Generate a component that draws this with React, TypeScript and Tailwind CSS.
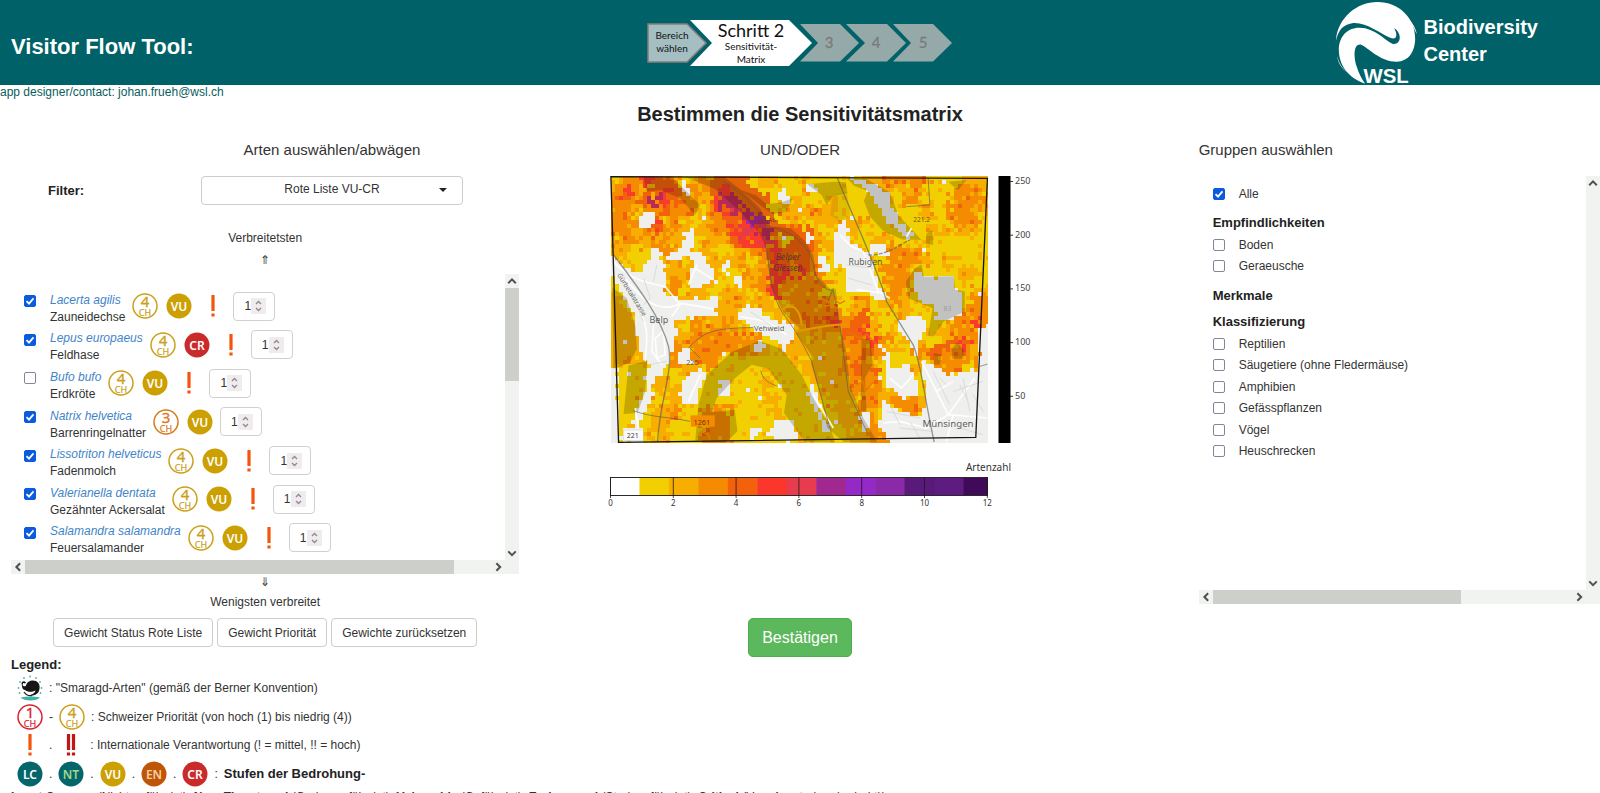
import { useState, type ReactNode } from "react";

/* ---------- header drawings ---------- */

function StepBar() {
  return (
    <svg viewBox="0 0 306 48" className="h-12 w-[306px]" role="img" aria-label="Schritt 2 von 5" fontFamily="Lato, 'Noto Sans', sans-serif">
      <path d="M1 5H40L59 24 40 43H1Z" fill="#a5bec2" stroke="#857e80" strokeWidth="1.500" />
      <path d="M43 1H142L165 24 142 47H43L65 24Z" fill="#fff" />
      <path d="M153 5H193L212 24 193 42.500H153L171 24Z" fill="#95aaa8" />
      <path d="M199 5H240L259 24 240 42.500H199L218 24Z" fill="#95aaa8" />
      <path d="M246 5H286L305 24 286 42.500H246L264 24Z" fill="#95aaa8" />
      <g textAnchor="middle">
        <g fill="#111" fontSize="10">
          <text x="25" y="20">Bereich</text>
          <text x="25" y="33">wählen</text>
          <text x="104" y="31">Sensitivität-</text>
          <text x="104" y="44">Matrix</text>
        </g>
        <text x="104" y="18" fontSize="18" fill="#111">Schritt 2</text>
        <g fill="#7b7b7b" fontSize="15" stroke="#7b7b7b" strokeWidth="0.300">
          <text x="182" y="29">3</text>
          <text x="229" y="29">4</text>
          <text x="276" y="29">5</text>
        </g>
      </g>
    </svg>
  );
}

function WslMark() {
  return (
    <svg viewBox="465 0 248 252" className="h-[84px] w-[83px]" role="img" aria-label="WSL" fill="#fff">
      <path d="M467 120C472 50 530 3 592 3 655 3 705 50 705 112 705 152 685 182 650 182 600 182 565 140 543 131 520 126 520 165 529 195 535 215 545 235 555 248 505 232 476 192 476 147 476 100 510 72 555 82 600 95 615 120 638 129 665 132 665 95 642 82 655 105 648 118 630 110 600 98 560 64 520 66 490 70 475 85 467 120Z" />
      <path d="M672 42C694 58 706 78 710 100 700 78 690 60 672 42Z" />
      <path d="M471 164C476 186 488 204 504 216 486 204 473 186 471 164Z" />
      <text x="550" y="247" fontFamily="'Liberation Sans', Arial, sans-serif" fontWeight="700" fontSize="61">WSL</text>
    </svg>
  );
}

/* ---------- badges ---------- */

function Priority({ level }: { level: number }) {
  const color = level === 1 ? "#d8232f" : level === 3 ? "#d97a1c" : "#cba01a";
  return (
    <svg viewBox="0 0 26 26" className="size-[26px] shrink-0" fill={color} textAnchor="middle" fontFamily="'Noto Sans', sans-serif">
      <circle cx="13" cy="13" r="12" fill="#fff" stroke={color} strokeWidth="1.500" />
      <text x="13" y="14" fontSize="15" stroke={color} strokeWidth="0.300">{level}</text>
      <text x="13" y="22.500" fontSize="9" stroke={color} strokeWidth="0.200">CH</text>
    </svg>
  );
}

const statusColors: Record<string, [string, string]> = {
  LC: ["#04666a", "#fff"],
  NT: ["#04666a", "#a6d68c"],
  VU: ["#cc9f02", "#fff"],
  EN: ["#bf5507", "#fbd0a0"],
  CR: ["#cb2a2a", "#fff"],
};

function Status({ code }: { code: string }) {
  const [bg, fg] = statusColors[code];
  return (
    <svg viewBox="0 0 26 26" className="size-[26px] shrink-0" textAnchor="middle" fontFamily="'Noto Sans', sans-serif">
      <circle cx="13" cy="13" r="12.500" fill={bg} />
      <text x="13" y="17.500" fontSize="12" fontWeight="600" fill={fg}>{code}</text>
    </svg>
  );
}

function Mark({ double = false }: { double?: boolean }) {
  const xs = double ? [10.5, 15.5] : [13];
  return (
    <svg viewBox="0 0 26 26" className="size-[26px] shrink-0" fill={double ? "#c21616" : "#f4550c"}>
      {xs.map((x) => (
        <g key={x}>
          <rect x={x - 1.6} y="2" width="3.200" height="16" />
          <rect x={x - 1.6} y="20.500" width="3.200" height="3" />
        </g>
      ))}
    </svg>
  );
}

function Emerald() {
  const dots = [[1.5, 13], [3, 7], [7, 3], [13, 1.5], [19, 3], [23, 7], [24.5, 13], [2.5, 18], [23.5, 18]];
  return (
    <svg viewBox="0 0 26 26" className="size-[26px] shrink-0">
      {dots.map(([x, y]) => <circle key={`${x}-${y}`} cx={x} cy={y} r="0.900" fill="#4fb3a6" />)}
      <path d="M3.500 22.500C10 21 17 21 23 22.500 20 26.500 7 26.500 3.500 22.500Z" fill="#3fb3a9" />
      <path d="M9 10.500C10 6 15 4.500 19 6 23 8 23.500 13 21.500 17 20 20 15 21.500 11 20.500 14 20 18 18.500 18.500 15.500 15 17.500 10 17 8 15 6 15 4.500 12 5 9 6 11.500 8 12 9 10.500Z" fill="#161616" />
      <path d="M5.500 9.500C4.500 7 7 6.500 8.500 8" stroke="#161616" strokeWidth="1.500" fill="none" />
      <path d="M7 17C9 20 12 21 15 20.500" stroke="#222" strokeWidth="1.300" fill="none" />
    </svg>
  );
}

/* ---------- controls ---------- */

function Tick({ id, initial = false }: { id: string; initial?: boolean }) {
  const [on, setOn] = useState(initial);
  return (
    <span className="relative grid size-3 shrink-0 place-items-center">
      <input
        id={id}
        type="checkbox"
        checked={on}
        onChange={() => setOn(!on)}
        className="size-3 appearance-none rounded-xs border border-[#85859a] bg-white checked:border-[#0a5be0] checked:bg-[#0a5be0]"
      />
      {on && (
        <svg viewBox="0 0 12 12" className="pointer-events-none absolute size-3" fill="none" stroke="#fff" strokeWidth="1.800">
          <path d="M2.500 6.200 5 8.700 9.500 3.300" />
        </svg>
      )}
    </span>
  );
}

function Chevron({ dir }: { dir: "up" | "down" | "left" | "right" }) {
  const paths = { up: "M3 8.500 6.500 5 10 8.500", down: "M3 5 6.500 8.500 10 5", left: "M8.500 3 5 6.500 8.500 10", right: "M5 3 8.500 6.500 5 10" };
  return (
    <svg viewBox="0 0 13 13" className="size-[14px] shrink-0" fill="none" stroke="#505050" strokeWidth="1.900">
      <path d={paths[dir]} />
    </svg>
  );
}

function VBar({ children }: { children?: ReactNode }) {
  return (
    <div aria-hidden="true" className="flex w-[14px] shrink-0 flex-col bg-[#f1f3f1]">
      <Chevron dir="up" />
      <div className="flex-1">{children}</div>
      <Chevron dir="down" />
    </div>
  );
}

function HBar({ children }: { children: ReactNode }) {
  return (
    <div aria-hidden="true" className="flex h-[14px] items-center bg-[#f1f3f1] pr-[14px]">
      <Chevron dir="left" />
      <div className="h-full flex-1">{children}</div>
      <Chevron dir="right" />
    </div>
  );
}

/* ---------- species list ---------- */

const species = [
  { latin: "Lacerta agilis", name: "Zauneidechse", prio: 4, status: "VU", mark: true, on: true },
  { latin: "Lepus europaeus", name: "Feldhase", prio: 4, status: "CR", mark: true, on: true },
  { latin: "Bufo bufo", name: "Erdkröte", prio: 4, status: "VU", mark: true, on: false },
  { latin: "Natrix helvetica", name: "Barrenringelnatter", prio: 3, status: "VU", mark: false, on: true },
  { latin: "Lissotriton helveticus", name: "Fadenmolch", prio: 4, status: "VU", mark: true, on: true },
  { latin: "Valerianella dentata", name: "Gezähnter Ackersalat", prio: 4, status: "VU", mark: true, on: true },
  { latin: "Salamandra salamandra", name: "Feuersalamander", prio: 4, status: "VU", mark: true, on: true },
];

function SpeciesRow({ item, index }: { item: (typeof species)[number]; index: number }) {
  const id = `species-${index}`;
  return (
    <li className="flex items-center">
      <div className="pb-[10px]">
        <Tick id={id} initial={item.on} />
      </div>
      <label htmlFor={id} className="ml-[14px] pt-[5px] leading-[17px]">
        <a href="#art" className="block text-[#4284c8] italic">{item.latin}</a>
        {item.name}
      </label>
      <div className="ml-[7px] flex gap-2">
        <Priority level={item.prio} />
        <Status code={item.status} />
        {item.mark && <Mark />}
      </div>
      <div className="ml-[7px] flex h-[29px] w-[42px] items-center rounded-sm border border-[#d0d0d0] pl-[10px]">
        <input
          type="number"
          defaultValue={1}
          aria-label={`Gewicht ${item.latin}`}
          className="w-[7px] appearance-none leading-4 [-moz-appearance:textfield] [&::-webkit-inner-spin-button]:appearance-none"
        />
        <svg viewBox="0 0 15 16" className="h-4 w-[15px] bg-[#f0ecee]" fill="none" stroke="#8c8894" strokeWidth="1.300">
          <path d="M5 6 7.500 3.500 10 6M5 10 7.500 12.500 10 10" />
        </svg>
      </div>
    </li>
  );
}

/* ---------- heat map ---------- */

type Pt = [number, number];

const heatRows = [
  "aoorddoyaonnnnyaayyayyyyyaaoooooyyyaaa",
  "oroadrdooonrnnnyyyyayyyyyyaayaoyyyoooa",
  "ooodmrdooarmmnnnyaayyaayyyyyyooyyyaooo",
  "ooaoodooayodmmnnyaaaoaayyyyyyyyaayoooa",
  "oooaraoayaordrpmnyayaaaayayyyyyyyyoooy",
  "ooaodoaaaaoorcrmddddayyyayyyyyyyaayaay",
  "aooaooaayoaadrrcoyddoayyayaayyyayyyyyy",
  "aayyooaayayyaaodrdddoyaaaayooooyyyyyyy",
  "ayyyaaayaaaaaoyordddoayyyayyoooayaayyy",
  "aayyyaaoaoayyoaorroroyyyyyyoooayyyyaay",
  "yyaaayoaaaayaaoorrooooyyayyoooyyyyyayy",
  "yyyayaoyaayaaayorooooyyyyyyaooyyyyyyaa",
  "yyayyyaaayaaoaaayaooooayaoyaoayyyyyyoo",
  "yyaayyaaaaaaaayaayoooooyadyyaayyyyyaoo",
  "ooaayyayoaaoayyyyaooddroddayyayyyyooro",
  "oaaayyayoooooaayaaaaoooddrayaayyyaaoao",
  "oaaayyaaoooooooyyaaaaaaodoroyaaayadroo",
  "ooaayyooooooooaayaaaaaaoodoaayooddooao",
  "ooaayyoaoooyyyyyyyaaaaaodoayyyyaoooooo",
  "yyyyyyyaayyyyyyyyyyaaaaododyyaaayooyyy",
  "yyyyaayyyyyyyyyayyyyaaaaoooyyayyayyyyy",
  "yyyyaaayyyyyyyyayyyyyaaaoooaaoyyayyyyy",
  "yyyayyayyyyyyyyaayyyyyaaaooaoooaayyyyy",
  "yyyyaaoyyoooyyyyayyyyyaaaoayyooaayyyyy",
  "yyyyaayyyyooyyyyyyyyyyyaaoayyyyaayyyyy",
  "yyaaaayyyoooyyyyyyyyyyyyaaoyyyyyyyyayy",
  "yyyyaayyyoooyyyyyyyayyayaaooyyyyyyooyy",
];

const heatColors: Record<string, string> = {
  y: "#f2cf00", a: "#f7ae00", o: "#f58b00", d: "#f0620c", r: "#fa3a2a",
  c: "#e33b4c", m: "#b92a56", p: "#a82a9c", n: "#e4640a", w: "#eff0ee",
};

const openAreas: Pt[][] = [
  [[31, 265], [70, 310], [110, 325], [150, 282], [192, 290], [196, 380], [240, 405], [350, 398], [352, 450], [230, 462], [228, 540], [205, 600], [165, 645], [150, 720], [105, 790], [95, 770], [130, 690], [142, 590], [118, 570], [100, 455], [31, 330]],
  [[262, 378], [278, 330], [275, 262], [312, 268], [330, 300], [352, 350]],
  [[255, 205], [282, 192], [282, 250], [245, 282], [208, 290], [205, 268], [250, 245]],
  [[152, 250], [178, 250], [182, 280], [155, 280]],
  [[402, 455], [435, 425], [470, 425], [500, 455], [585, 485], [585, 520], [555, 548], [500, 512], [440, 480]],
  [[704, 208], [730, 172], [745, 195], [752, 235], [810, 262], [832, 345], [860, 405], [835, 410], [810, 385], [740, 378], [735, 310], [704, 305]],
  [[810, 240], [865, 235], [862, 265], [815, 275]],
  [[960, 590], [1000, 600], [1060, 632], [1180, 600], [1180, 845], [885, 845], [840, 790], [850, 705], [910, 745], [965, 745], [985, 700], [975, 650]],
  [[883, 445], [900, 465], [950, 450], [985, 470], [965, 515], [950, 580], [930, 530], [900, 500]],
  [[870, 600], [935, 602], [960, 680], [905, 702], [848, 655]],
  [[755, 40], [800, 45], [865, 85], [885, 150], [942, 210], [925, 222], [890, 190], [860, 168], [840, 130], [808, 85]],
  [[945, 350], [935, 325], [965, 320], [985, 338], [1062, 335], [1068, 375], [1088, 380], [1085, 450], [1010, 470], [1000, 420], [950, 400]],
  [[255, 640], [300, 612], [322, 620], [292, 710], [250, 722], [240, 690]],
  [[110, 148], [156, 148], [162, 186], [112, 186]],
  [[530, 92], [555, 78], [575, 90], [570, 118], [540, 118]],
  [[615, 55], [648, 60], [648, 88], [618, 85]],
  [[365, 292], [395, 292], [395, 318], [370, 318]],
  [[402, 332], [430, 332], [432, 362], [405, 362]],
  [[245, 48], [268, 62], [270, 88], [250, 82]],
  [[615, 205], [640, 205], [638, 235], [618, 232]],
  [[535, 762], [580, 765], [605, 825], [560, 830], [500, 808]],
  [[450, 790], [480, 790], [480, 820], [452, 820]],
  [[355, 648], [392, 648], [388, 690], [360, 690]],
  [[465, 532], [495, 532], [490, 562], [465, 562]],
  [[232, 568], [258, 540], [265, 570], [285, 600], [235, 600]],
  [[780, 740], [810, 745], [810, 790], [790, 800]],
  [[850, 555], [875, 555], [870, 590], [850, 590]],
  [[660, 278], [680, 278], [685, 320], [662, 318]],
  [[620, 690], [640, 650], [660, 740], [700, 800], [680, 810], [650, 750]],
  [[31, 610], [50, 610], [55, 835], [31, 835]],
  [[72, 790], [130, 790], [130, 832], [60, 832]],
  [[1140, 500], [1180, 470], [1180, 620], [1140, 620]],
];

const extraCells: [string, Pt[]][] = [
  ["y", [[55, 620], [100, 600], [95, 730], [60, 780]]],
  ["a", [[31, 375], [110, 480], [110, 560], [31, 610]]],
  ["o", [[1055, 805], [1110, 805], [1110, 835], [1055, 835]]],
];

const shades = [
  "M255 36L372 36 430 80 480 130 512 185 572 190 615 228 640 270 648 330 690 372 708 372 715 460 740 570 750 660 790 760 832 832 732 832 682 790 664 700 634 600 634 570 588 505 598 490 548 440 512 365 500 255 478 205 420 140 345 72Z",
  "M130 36L215 36 260 80 300 120 285 150 240 100 180 75 140 80Z",
  "M425 76L470 92 500 118 545 112 578 100 560 140 520 148 490 128Z",
  "M622 58L700 50 738 52 742 85 700 92 680 120 665 90Z",
  "M740 38L800 42 870 82 895 150 965 225 908 224 850 198 810 155 792 108 804 78 762 62Z",
  "M918 350L945 310 965 298 972 336 1062 334 1066 375 1095 380 1095 440 1032 470 1000 515 985 512 998 430 925 400Z",
  "M36 368L80 400 106 485 110 552 88 595 40 612Z",
  "M85 602L142 588 135 680 112 745 70 748Z",
  "M285 832L295 720 320 630 395 562 478 528 545 552 605 630 640 700 692 790 705 832 615 832 552 745 560 690 505 612 455 600 405 640 350 700 335 742 404 735 412 800 380 832Z",
  "M1055 555L1070 532 1092 555 1090 582 1058 582Z",
  "M785 520L812 525 818 600 795 640 800 740 782 740Z",
  "M980 205L998 195 1000 240 978 235Z",
  "M1045 50L1100 45 1075 76Z",
  "M1002 565L1025 570 1020 600 1002 600Z",
];

const noise = (x: number, y: number, s: number) => {
  const v = Math.sin(x * 127.1 + y * 311.7 + s * 74.7) * 43758.5453;
  return v - Math.floor(v);
};

const inside = (x: number, y: number, poly: Pt[]) => {
  let hit = false;
  for (let i = 0, j = poly.length - 1; i < poly.length; j = i++) {
    const [xi, yi] = poly[i];
    const [xj, yj] = poly[j];
    if (yi > y !== yj > y && x < ((xj - xi) * (y - yi)) / (yj - yi) + xi) hit = !hit;
  }
  return hit;
};

const heatPaths = (() => {
  const size = 12;
  const out: Record<string, string> = {};
  const order = "yaodrcmp";
  for (let r = 0; r * size < 802; r++) {
    for (let c = 0; c * size < 1132; c++) {
      const x = 31 + c * size + 6;
      const y = 33 + r * size + 6;
      const jx = x + (noise(c, r, 1) - 0.5) * 26;
      const jy = y + (noise(c, r, 2) - 0.5) * 26;
      const row = heatRows[Math.max(0, Math.min(26, Math.floor((jy - 33) / 30)))];
      let key = row[Math.max(0, Math.min(37, Math.floor((jx - 31) / 30)))] ?? "y";
      const n = noise(c, r, 3);
      const at = order.indexOf(key);
      if (at >= 0 && n > 0.93 && at < 3) key = order[at + 1];
      else if (at > 0 && n < 0.09) key = order[at - 1];
      for (const [k, poly] of extraCells) if (inside(x, y, poly)) key = k;
      const wx = x + (noise(c, r, 4) - 0.5) * 10;
      const wy = y + (noise(c, r, 5) - 0.5) * 10;
      if (openAreas.some((p) => inside(wx, wy, p))) key = "w";
      else if (n > 0.493 && n < 0.5 && at < 2) key = "w";
      out[key] = (out[key] ?? "") + `M${x - 6} ${y - 6}h12v12h-12z`;
    }
  }
  return out;
})();

function HeatMap() {
  return (
    <svg viewBox="31 33 1132 802" className="h-[267px] w-[378px]" role="img" aria-label="Sensitivitätskarte" fontFamily="'Noto Sans', sans-serif">
      <g shapeRendering="crispEdges">
        {Object.entries(heatPaths).map(([k, d]) => <path key={k} d={d} fill={heatColors[k]} />)}
      </g>
      {shades.map((d) => <path key={d} d={d} fill="#000" fillOpacity="0.190" />)}
      <path d="M700 90L742 80 750 150 720 170 690 150Z" fill="#000" fillOpacity="0.080" />
      <g fill="none" stroke="#fff" strokeWidth="5" strokeOpacity="0.900">
        <path d="M38 290C90 340 120 350 195 365M75 340C120 400 180 450 240 415L340 432M195 365L240 420 215 455M110 430C150 480 140 530 135 590M160 480L155 560 185 600M165 520L190 500 195 570 170 580Z" />
        <path d="M265 360L290 300M285 310L340 345M420 455L500 470 560 510M720 210L755 245 790 260 835 380 870 400M770 375L850 385" />
        <path d="M965 590L1010 680 1045 750 1163 760M1045 750L980 790 900 770 850 775M1045 750L1125 640M1010 680L1060 650M1060 750L1040 830M870 640L905 670 940 630M920 215L935 190M300 630L265 710M105 730L115 790M640 690L700 790" />
      </g>
      <g fill="none" stroke="#cfcfcf" strokeWidth="2">
        <path d="M130 340L150 400 130 420M90 380L130 470M145 600L200 590M170 300L160 350M1000 620L1050 720M1060 680L1150 650M1090 640L1110 740M900 790L1000 800M870 720L900 780M1080 790L1150 810M740 300L820 310M745 340L815 360M450 440L540 500M1080 660L1100 700M1120 690L1150 740M1020 640L1040 660M860 740L960 760M930 770L960 820" />
      </g>
      <g fill="none" stroke="#555" strokeOpacity="0.600" strokeWidth="4">
        <path d="M40 270C100 350 180 450 205 545 220 620 180 700 172 832" />
        <path d="M712 38C760 160 830 300 860 410L940 540C965 600 970 680 1003 832" />
        <path d="M805 270C850 275 900 240 930 225" strokeDasharray="12 4" />
        <path d="M265 550C310 500 340 490 460 488M270 550L300 580" strokeWidth="3" />
        <path d="M100 738C160 760 200 755 270 770M482 618C490 650 510 655 530 664" strokeWidth="3" />
        <path d="M370 50C440 90 490 150 500 185 560 190 620 230 638 290 650 350 660 370 700 378 720 460 735 600 745 680L800 800" strokeWidth="3" />
        <path d="M500 255C510 340 520 400 545 440 580 490 590 500 635 590L670 720 690 790" strokeWidth="3" />
        <path d="M985 40L990 120 920 125M700 370L680 420M1140 605L1163 598" strokeWidth="3" />
      </g>
      <path d="M545 435C575 410 600 430 605 480M585 500C640 490 680 480 735 478" fill="none" stroke="#e39a00" strokeWidth="6" />
      <path d="M770 660l20-10 5 30 25-28M300 800l25 10 5 20M665 400l20 12 15-10 20 14 15-8M670 425l25-5 20 12M740 500l40 20 20-12 30 30" fill="none" stroke="#e37a00" strokeWidth="4" />
      <g fill="#333" fillOpacity="0.800" fontSize="26">
        <text x="148" y="476" fontSize="27">Belp</text>
        <text x="462" y="499" fontSize="23">Vehweid</text>
        <text x="746" y="299">Rubigen</text>
        <text x="968" y="786" fontSize="29">Münsingen</text>
        <text x="527" y="286" fontStyle="italic">Belper</text>
        <text x="520" y="318" fontStyle="italic">Giessen</text>
        <text x="940" y="172" fontSize="20">221.2</text>
        <text x="258" y="600" fontSize="22">225</text>
        <text x="505" y="170" fontSize="18">A6</text>
        <text x="1030" y="440" fontSize="22" fillOpacity="0.300">83</text>
      </g>
      <text transform="translate(50 330) rotate(58)" fontSize="20" fill="#666">Gürbetalstrasse</text>
      <rect x="272" y="752" width="72" height="34" fill="#f58b00" />
      <text x="280" y="780" fontSize="22" fill="#6b3d00">1261</text>
      <rect x="71" y="796" width="58" height="32" fill="#fafafa" stroke="#bbb" />
      <text x="80" y="820" fontSize="21" fill="#444">221</text>
      <path d="M32 35L1163 40 1128 818 55 833Z" fill="none" stroke="#161616" strokeWidth="4" />
    </svg>
  );
}

const legendSegments = [
  "#ffffff", "#f2cf00", "#f8ae00", "#f58b00", "#f4610c", "#fa372a", "#e63c4e",
  "#a1288e", "#9529c8", "#8a2aa8", "#5a1a7a", "#5e1c80", "#400a58",
];

function MapFigure() {
  const w = 377 / 12.8;
  return (
    <div className="flex flex-col">
      <div className="flex gap-[10px]">
        <HeatMap />
        <svg viewBox="0 0 40 267" className="h-[267px] w-10 overflow-visible" fontFamily="'Noto Sans', sans-serif" fontSize="9" fill="#444">
          <rect width="12" height="267" x="0.500" fill="#000" />
          {[250, 200, 150, 100, 50].map((v, i) => (
            <g key={v}>
              <path d={`M12 ${5.500 + i * 53.7}h3`} stroke="#333" />
              <text x="17" y={8 + i * 53.7}>{v}</text>
            </g>
          ))}
        </svg>
      </div>
      <svg viewBox="0 0 403 56" className="mt-[14px] h-14 w-[403px] overflow-visible" fontFamily="'Noto Sans', sans-serif">
        <text x="401" y="14" textAnchor="end" fontSize="10" fill="#333">Artenzahl</text>
        {legendSegments.map((c, i) => (
          <rect key={c} x={i * w} y="20" width={i === 12 ? 378 - i * w : w + 0.5} height="18" fill={c} />
        ))}
        <rect x="0.500" y="20.500" width="377" height="18" fill="none" stroke="#2a2a2a" />
        {[0, 2, 4, 6, 8, 10, 12].map((v) => (
          <g key={v}>
            <path d={`M${0.5 + v * 31.4} 20v21`} stroke="#1c1c1c" strokeOpacity="0.800" />
            <text x={0.5 + v * 31.4} y="49" textAnchor="middle" fontSize="8" fill="#333">{v}</text>
          </g>
        ))}
      </svg>
    </div>
  );
}

/* ---------- groups ---------- */

function GroupItems({ names, start }: { names: string[]; start: string }) {
  return (
    <ul className="grid h-full auto-rows-fr">
      {names.map((n) => (
        <li key={n} className="flex items-center gap-[14px]">
          <Tick id={`${start}-${n}`} initial={n === "Alle"} />
          <label htmlFor={`${start}-${n}`}>{n}</label>
        </li>
      ))}
    </ul>
  );
}

const plainButton = "h-[29px] rounded-sm border border-[#ccc] bg-white px-[10px]";
const strong = "text-[13px] font-bold text-[#222]";

export default function App() {
  return (
    <div className="h-screen overflow-hidden bg-white font-['Liberation_Sans',Arial,sans-serif] text-[12px] leading-[18px] text-[#333]">
      <header className="grid h-[85px] grid-cols-3 items-center bg-[#006268] text-white">
        <p className="pt-[9px] pl-[11px] text-[22px] leading-7 font-bold">Visitor Flow Tool:</p>
        <div className="flex justify-center"><StepBar /></div>
        <div className="flex items-center justify-end gap-[6px] pr-[62px]">
          <WslMark />
          <p className="pb-[3px] text-[20px] leading-[27px] font-bold">Biodiversity<br />Center</p>
        </div>
      </header>
      <p className="h-[15px] leading-[15px] text-[#0b5c62]">app designer/contact: johan.frueh@wsl.ch</p>

      <h1 className="text-center text-[20px] leading-7 font-bold text-[#222]">Bestimmen die Sensitivitätsmatrix</h1>

      <main className="grid grid-cols-3 pt-3">
        <section className="pr-[14px] pl-[11px]">
          <div className="grid grid-cols-[190px_262px] items-center">
            <h2 className="col-start-2 text-center text-[15px] leading-5">Arten auswählen/abwägen</h2>
            <label htmlFor="filter" className={`mt-4 pl-[37px] ${strong}`}>Filter:</label>
            <div className="relative mt-4">
              <select id="filter" className="h-[29px] w-full appearance-none rounded-sm border border-[#ccc] bg-white pb-1 text-center [text-align-last:center]">
                <option>Rote Liste VU-CR</option>
              </select>
              <svg viewBox="0 0 8 4" className="pointer-events-none absolute top-3 right-4 h-1 w-2"><path d="M0 0h8L4 4Z" fill="#222" /></svg>
            </div>
          </div>
          <div className="mt-6 text-center">
            <p>Verbreitetsten</p>
            <p className="mt-1">⇑</p>
          </div>

          <div className="mt-[5px]">
            <div className="flex h-[286px]">
              <ul className="grid h-[283px] flex-1 grid-rows-7 pt-[13px] pl-[13px]">
                {species.map((s, i) => <SpeciesRow key={s.latin} item={s} index={i} />)}
              </ul>
              <VBar><div className="h-[36%] bg-[#cdcfca]" /></VBar>
            </div>
            <HBar><div className="h-full w-[92%] bg-[#cdcfca]" /></HBar>
          </div>

          <div className="text-center">
            <p className="leading-4">⇓</p>
            <p className="mt-[3px]">Wenigsten verbreitet</p>
          </div>
          <div className="mt-[7px] flex justify-center gap-1">
            <button type="button" className={plainButton}>Gewicht Status Rote Liste</button>
            <button type="button" className={plainButton}>Gewicht Priorität</button>
            <button type="button" className={plainButton}>Gewichte zurücksetzen</button>
          </div>

          <div className="mt-[9px] whitespace-nowrap">
            <h2 className={strong}>Legend:</h2>
            <div className="grid pl-[6px]">
              <p className="flex h-[28px] items-center gap-[6px]"><Emerald /> : "Smaragd-Arten" (gemäß der Berner Konvention)</p>
              <p className="flex h-[29px] items-center gap-[6px]"><Priority level={1} /> - <Priority level={4} /> : Schweizer Priorität (von hoch (1) bis niedrig (4))</p>
              <p className="flex h-[28px] items-center gap-[6px]"><Mark /> . <Mark double /> : Internationale Verantwortung (! = mittel, !! = hoch)</p>
              <p className="flex h-[29px] items-center gap-[6px]">
                <Status code="LC" /> . <Status code="NT" /> . <Status code="VU" /> . <Status code="EN" /> . <Status code="CR" /> : <b className={strong}>Stufen der Bedrohung-</b>
              </p>
            </div>
            <p>
              <b>Least Concern</b> (Nicht gefährdet), <b>Near Threatened</b> (Gering gefährdet), <b>Vulnerable</b> (Gefährdet), <b>Endangered</b> (Stark gefährdet), <b>Critical</b> (Vom Aussterben bedroht))
            </p>
          </div>
        </section>

        <section className="flex flex-col items-center">
          <h2 className="text-[15px] leading-5">UND/ODER</h2>
          <div className="mt-4 pl-[48px]"><MapFigure /></div>
          <button type="button" className="mt-[105px] h-[39px] rounded-[5px] border border-[#4cae4c] bg-[#5cb85c] px-[13px] text-base text-white">Bestätigen</button>
        </section>

        <section className="pl-[132px]">
          <h2 className="text-[15px] leading-5">Gruppen auswählen</h2>
          <div className="mt-4 flex h-[414px]">
            <div className="flex-1 pt-[7px] pl-[14px]">
              <div className="h-[21px]"><GroupItems names={["Alle"]} start="alle" /></div>
              <h3 className={`mt-[10px] ${strong}`}>Empfindlichkeiten</h3>
              <div className="mt-[2px] h-[43px]"><GroupItems names={["Boden", "Geraeusche"]} start="empf" /></div>
              <h3 className={`mt-[10px] ${strong}`}>Merkmale</h3>
              <h3 className={`mt-2 ${strong}`}>Klassifizierung</h3>
              <div className="mt-[2px] h-[129px]">
                <GroupItems names={["Reptilien", "Säugetiere (ohne Fledermäuse)", "Amphibien", "Gefässpflanzen", "Vögel", "Heuschrecken"]} start="klass" />
              </div>
            </div>
            <VBar />
          </div>
          <HBar><div className="h-full w-[69%] bg-[#cdcfca]" /></HBar>
        </section>
      </main>
    </div>
  );
}
